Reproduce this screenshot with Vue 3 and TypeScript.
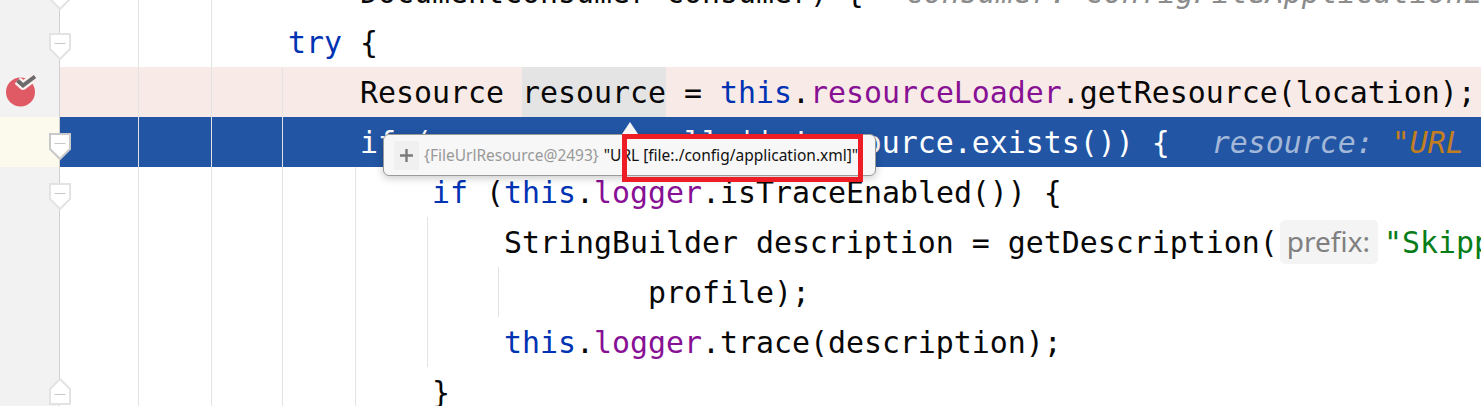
<script setup lang="ts">
type Tok = { t: string; c?: string }
type Line = { kind?: string; toks: Tok[] }

const lines: Line[] = [
  { toks: [{ t: '    ' }, { t: 'DocumentConsumer consumer) {' }, { t: '  ' }, { t: 'consumer: ConfigFileApplicationL', c: 'hint' }] },
  { toks: [{ t: 'try', c: 'kw' }, { t: ' {' }] },
  { kind: 'bpline', toks: [{ t: '    Resource ' }, { t: 'resource', c: 'mark' }, { t: ' = ' }, { t: 'this', c: 'kw' }, { t: '.' }, { t: 'resourceLoader', c: 'field' }, { t: '.getResource(location);' }] },
  { kind: 'sel', toks: [{ t: '    if (resource == null || !resource.exists()) {' }, { t: '  ' }, { t: 'resource: ', c: 'hintsel' }, { t: '"URL [file:./config/application.xml]"', c: 'strsel' }] },
  { toks: [{ t: '        ' }, { t: 'if', c: 'kw' }, { t: ' (' }, { t: 'this', c: 'kw' }, { t: '.' }, { t: 'logger', c: 'field' }, { t: '.isTraceEnabled()) {' }] },
  { toks: [{ t: '            StringBuilder description = getDescription(' }, { t: 'prefix:', c: 'param' }, { t: '"Skipped profile"', c: 'str' }] },
  { toks: [{ t: '                    profile);' }] },
  { toks: [{ t: '            ' }, { t: 'this', c: 'kw' }, { t: '.' }, { t: 'logger', c: 'field' }, { t: '.trace(description);' }] },
  { toks: [{ t: '        }' }] },
]

const guides = [
  { x: 138, top: 0, h: 406 },
  { x: 211, top: 0, h: 406 },
  { x: 282, top: 67, h: 339 },
  { x: 355, top: 167, h: 239 },
  { x: 427, top: 217, h: 150 },
  { x: 498, top: 267, h: 50 },
]
const folds = [
  { y: -17, up: false, sel: false },
  { y: 33, up: false, sel: false },
  { y: 133, up: false, sel: true },
  { y: 183, up: false, sel: false },
  { y: 377, up: true, sel: false },
]
</script>

<template>
  <div class="editor">
    <div class="gutter">
      <div
        v-for="(l, i) in lines"
        :key="i"
        class="gutter-row"
        :class="{ current: l.kind === 'sel' }"
      >
        <svg v-if="l.kind === 'bpline'" class="bp" width="32" height="32" viewBox="0 0 32 32">
          <circle cx="14.500" cy="16" r="14.500" fill="#e05a66" />
          <path d="M11.500 4.500l5.500 5 12-9" fill="none" stroke="#fbeeee" stroke-width="8.500" stroke-linejoin="round" />
          <path d="M11.500 4.500l5.500 5 12-9" fill="none" stroke="#6b6b6b" stroke-width="4" />
        </svg>
      </div>
    </div>
    <div class="code">
      <div
        v-for="(l, i) in lines"
        :key="i"
        class="line"
        :class="l.kind"
      >
        <span v-for="(k, j) in l.toks" :key="j" :class="k.c">{{ k.t }}</span>
      </div>
    </div>

    <i
      v-for="g in guides"
      :key="g.x"
      class="guide"
      :style="{ left: g.x + 'px', top: g.top + 'px', height: g.h + 'px' }"
    ></i>

    <svg
      v-for="f in folds"
      :key="f.y"
      class="fold"
      :class="{ up: f.up }"
      :style="{ top: f.y + 'px' }"
      width="22"
      height="28"
      viewBox="0 0 22 28"
    >
      <path
        d="M1 1H21V16L11 26L1 16Z"
        fill="#fff"
        :stroke="f.sel ? '#c9c9c9' : '#e3e3e3'"
        stroke-width="2"
      />
      <path d="M5.500 10.500H16.500" stroke="#c8c8c8" stroke-width="1" />
    </svg>

    <div class="tooltip">
      <span class="plus">
        <svg width="13" height="13" viewBox="0 0 13 13">
          <path d="M6.500 0V13M0 6.500H13" stroke="#7a7a7a" stroke-width="2.400" />
        </svg>
      </span>
      <span class="type">{FileUrlResource@2493}</span>
      <span class="val">"URL [file:./config/application.xml]"</span>
    </div>
    <div class="red-box"></div>
  </div>
</template>

<style>
html, body { margin: 0; background: #fff; }
</style>

<style scoped>
.editor {
  position: relative;
  display: flex;
  width: 1481px;
  height: 406px;
  overflow: hidden;
  background: #fff;
}
.gutter {
  flex: none;
  width: 59px;
  margin-top: -33px;
  background: #f2f2f2;
  border-right: 1px solid #d0d0d0;
}
.gutter-row {
  position: relative;
  height: 50px;
}
.gutter-row.current {
  background: #fcfaed;
}
.bp {
  position: absolute;
  left: 6px;
  top: 9px;
  overflow: visible;
}
.code {
  flex: 1;
  min-width: 0;
  margin-top: -33px;
}
.line {
  height: 50px;
  padding-left: 228px;
  font: 29.900px/52px "DejaVu Sans Mono", "Liberation Mono", monospace;
  color: #080808;
  white-space: pre;
  overflow: hidden;
}
.line.bpline {
  background: #f8ebe7;
}
.line.sel {
  background: #2255a4;
  color: #fff;
}
.kw { color: #0033b3; }
.field { color: #871094; }
.str { color: #067d17; }
.mark {
  display: inline-block;
  height: 50px;
  vertical-align: top;
  background: #e4e4e4;
}
.hint {
  margin-left: 6px;
  color: #8c8c8c;
  font-style: italic;
}
.hintsel {
  margin-left: 6px;
  color: #a3b8d8;
  font-style: italic;
}
.strsel {
  color: #c27e20;
  font-style: italic;
}
.param {
  display: inline-block;
  height: 44px;
  margin: 0 6px 0 2px;
  padding: 0 8px 0 7px;
  border-radius: 5px;
  background: #f4f4f4;
  color: #808080;
  font: 28px/42px "Noto Sans", sans-serif;
  vertical-align: top;
  position: relative;
  top: 3px;
}
.guide {
  position: absolute;
  width: 1px;
  background: #e3e3e3;
}
.fold {
  position: absolute;
  left: 49px;
}
.fold.up {
  transform: scaleY(-1);
}
.tooltip {
  position: absolute;
  left: 383px;
  top: 134px;
  box-sizing: border-box;
  display: flex;
  align-items: center;
  width: 493px;
  height: 42px;
  padding-left: 10px;
  background: #f7f7f7;
  border: 1px solid #9a9a9a;
  border-radius: 6px;
  box-shadow: 0 2px 8px rgba(0, 0, 0, 0.22);
  font: 15.500px/20px "Noto Sans", "Open Sans", sans-serif;
  white-space: nowrap;
}
.tooltip::before {
  content: "";
  position: absolute;
  left: 238px;
  top: -13px;
  border: 8px solid transparent;
  border-top: 0;
  border-bottom: 12px solid #f7f7f7;
}
.plus {
  display: flex;
  align-items: center;
  justify-content: center;
  width: 25px;
  height: 29px;
  margin-right: 5px;
  background: #f0f0f0;
}
.type {
  color: #999;
  margin-right: 5px;
}
.val {
  color: #111;
}
.red-box {
  position: absolute;
  left: 622px;
  top: 134px;
  box-sizing: border-box;
  width: 241px;
  height: 48px;
  border: 5px solid #ee1c25;
}
</style>
